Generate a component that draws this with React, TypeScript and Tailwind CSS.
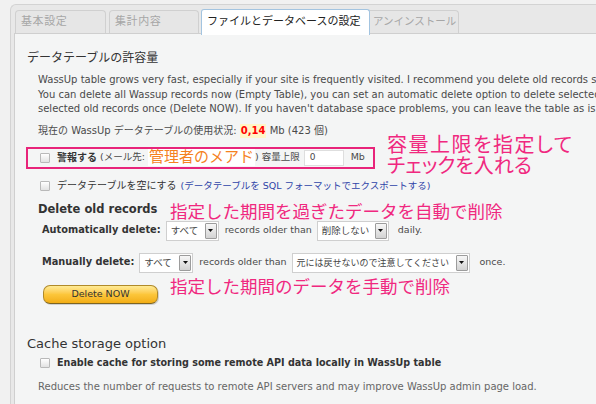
import type { ReactNode } from 'react'

const TABS = [
  { label: '基本設定', w: 'w-[91px]', gap: 'ml-0' },
  { label: '集計内容', w: 'w-[90px]', gap: 'ml-[3px]' },
]

function Checkbox() {
  return (
    <span className="inline-block size-[10px] shrink-0 rounded-[1px] border border-[#b9b9b9] bg-gradient-to-b from-white to-[#e2e2e2]" />
  )
}

function Select({ width, label, small }: { width: string; label: string; small?: boolean }) {
  return (
    <div className={`flex h-[20px] ${width} shrink-0 items-stretch border border-[#cfcfcf] bg-white`}>
      <span
        className={`flex-1 overflow-hidden whitespace-nowrap pl-[4px] leading-[18px] text-[#444] ${
          small ? 'text-[9px]' : 'text-[9.5px]'
        }`}
      >
        {label}
      </span>
      <span className="m-px flex w-[12px] items-center justify-center rounded-[1px] border border-[#9c9c9c] bg-gradient-to-b from-[#f7f7f7] to-[#d3d3d3]">
        <svg width="5" height="3" viewBox="0 0 5 3">
          <path d="M0 0h5L2.5 3z" fill="#111" />
        </svg>
      </span>
    </div>
  )
}

function Note({ className, children }: { className: string; children: ReactNode }) {
  return (
    <div className={`absolute whitespace-nowrap font-['Noto_Sans_CJK_JP',sans-serif] text-[#f0287f] ${className}`}>
      {children}
    </div>
  )
}

export default function App() {
  return (
    <div className="relative h-[404px] w-[596px] overflow-hidden bg-[#f1f1f1] pl-[10px] pt-[4px] font-['DejaVu_Sans','Noto_Sans_CJK_JP',sans-serif] text-[#4a4a4a]">
      <div className="flex h-full flex-col rounded-tl-[6px] border-l border-t border-[#d3d3d3] bg-[#e8e8e8] pl-[3px] pt-[5px]">
        {/* tabs */}
        <div className="relative z-10 flex h-[23px] shrink-0 items-end pl-px">
          {TABS.map((t) => (
            <div
              key={t.label}
              className={`${t.w} ${t.gap} flex h-[23px] items-center whitespace-nowrap rounded-t-[4px] border border-b-0 border-[#d0d0d0] bg-[#e6e6e6] pl-[5px] text-[11px] tracking-[0.6px] text-[#a6a6a6]`}
            >
              {t.label}
            </div>
          ))}
          <div className="relative z-10 -mb-[2px] ml-[2px] flex h-[26px] w-[169px] items-center whitespace-nowrap rounded-t-[3px] border border-b-0 border-[#a3c4e0] bg-white pl-[5px] text-[11px] text-[#222]">
            ファイルとデータベースの設定
          </div>
          <div className="-ml-[4px] flex h-[23px] w-[93px] items-center whitespace-nowrap rounded-t-[4px] border border-b-0 border-[#d0d0d0] bg-[#e6e6e6] pl-[6px] text-[10.5px] text-[#a6a6a6]">
            アンインストール
          </div>
        </div>

        {/* panel */}
        <div className="flex-1 overflow-hidden border-l border-t border-[#cfcfcf] bg-[#f4f5f5] pt-[16px]">
          <h2 className="ml-[12px] text-[12px] leading-[16px] text-[#333]">データテーブルの許容量</h2>

          <div className="ml-[23px] mt-[7px] whitespace-nowrap text-[10px] leading-[14.5px]">
            <p>
              WassUp table grows very fast, especially if your site is frequently visited. I recommend you delete old
              records sometimes.
            </p>
            <p>
              You can delete all Wassup records now (Empty Table), you can set an automatic delete option to delete
              selected old records daily and you can manually delete
            </p>
            <p>
              selected old records once (Delete NOW). If you haven't database space problems, you can leave the table as
              is.
            </p>
          </div>

          <p className="ml-[23px] mt-[7px] flex items-center whitespace-nowrap text-[10px] leading-[14px]">
            現在の WassUp データテーブルの使用状況:&nbsp;
            <span className="bg-[#fff6c8] px-px text-[10px] font-bold text-[#ff0000]">0,14</span>
            &nbsp;Mb (423 個)
          </p>

          <div className="ml-[11px] mt-[9px] flex h-[22px] w-[349px] items-center whitespace-nowrap border-2 border-[#e8247a] pl-[12px]">
            <Checkbox />
            <span className="ml-[7px] text-[10px] font-bold text-[#333]">警報する</span>
            <span className="ml-[3px] text-[9.5px]">(メール先:</span>
            <span className="ml-[3px] bg-white px-px text-[15px] leading-[17px] text-[#f5821f]">管理者のメアド</span>
            <span className="text-[9.5px]">) 容量上限</span>
            <span className="ml-[4px] flex h-[16px] w-[40px] items-center border border-[#dedede] bg-white pl-[5px] text-[9px]">
              0
            </span>
            <span className="ml-[7px] text-[9.5px]">Mb</span>
          </div>

          <div className="ml-[25px] mt-[9px] flex items-center whitespace-nowrap leading-[16px]">
            <Checkbox />
            <span className="ml-[7px] text-[10px] text-[#333]">データテーブルを空にする</span>
            <span className="ml-[4px] text-[9.5px] text-[#2f44a8]">(データテーブルを SQL フォーマットでエクスポートする)</span>
          </div>

          <h3 className="ml-[23px] mt-[7px] text-[11.5px] font-bold leading-[16px] text-[#333]">Delete old records</h3>

          <div className="ml-[27px] mt-[4px] flex h-[20px] items-center whitespace-nowrap text-[9.5px]">
            <span className="text-[9.8px] font-bold text-[#333]">Automatically delete:</span>
            <span className="ml-[5px]">
              <Select width="w-[53px]" label="すべて" />
            </span>
            <span className="ml-[6px]">records older than</span>
            <span className="ml-[5px]">
              <Select width="w-[72px]" label="削除しない" />
            </span>
            <span className="ml-[9px]">daily.</span>
          </div>

          <div className="ml-[27px] mt-[12px] flex h-[20px] items-center whitespace-nowrap text-[9.5px]">
            <span className="text-[9.8px] font-bold text-[#333]">Manually delete:</span>
            <span className="ml-[5px]">
              <Select width="w-[54px]" label="すべて" />
            </span>
            <span className="ml-[6px]">records older than</span>
            <span className="ml-[5px]">
              <Select width="w-[178px]" label="元には戻せないので注意してください" small />
            </span>
            <span className="ml-[10px]">once.</span>
          </div>

          <button
            type="button"
            className="ml-[28px] mt-[12px] flex h-[19px] w-[115px] items-center justify-center rounded-[7px] border border-[#b08a2a] border-b-[#7d6420] bg-gradient-to-b from-[#ffeb94] via-[#fcc63a] to-[#f2ad12] text-[9.5px] text-[#333] shadow-[1px_1px_0_rgba(0,0,0,0.15)]"
          >
            Delete NOW
          </button>

          <h3 className="ml-[12px] mt-[31px] text-[13px] leading-[18px] text-[#333]">Cache storage option</h3>

          <div className="ml-[25px] mt-[3px] flex items-center whitespace-nowrap leading-[14px]">
            <Checkbox />
            <span className="ml-[7px] text-[9.6px] font-bold text-[#333]">
              Enable cache for storing some remote API data locally in WassUp table
            </span>
          </div>

          <p className="ml-[23px] mt-[10px] whitespace-nowrap text-[10px] leading-[14px] text-[#666]">
            Reduces the number of requests to remote API servers and may improve WassUp admin page load.
          </p>
        </div>
      </div>

      {/* callouts */}
      <Note className="left-[387px] top-[133px] text-[20px] leading-[21px] [font-feature-settings:'palt']">
        <div className="tracking-[1.5px]">容量上限を指定して</div>
        <div>チェックを入れる</div>
      </Note>
      <Note className="left-[170px] top-[200px] text-[17.5px] leading-[21px]">指定した期間を過ぎたデータを自動で削除</Note>
      <Note className="left-[170px] top-[275px] text-[17.5px] leading-[21px]">指定した期間のデータを手動で削除</Note>
    </div>
  )
}
